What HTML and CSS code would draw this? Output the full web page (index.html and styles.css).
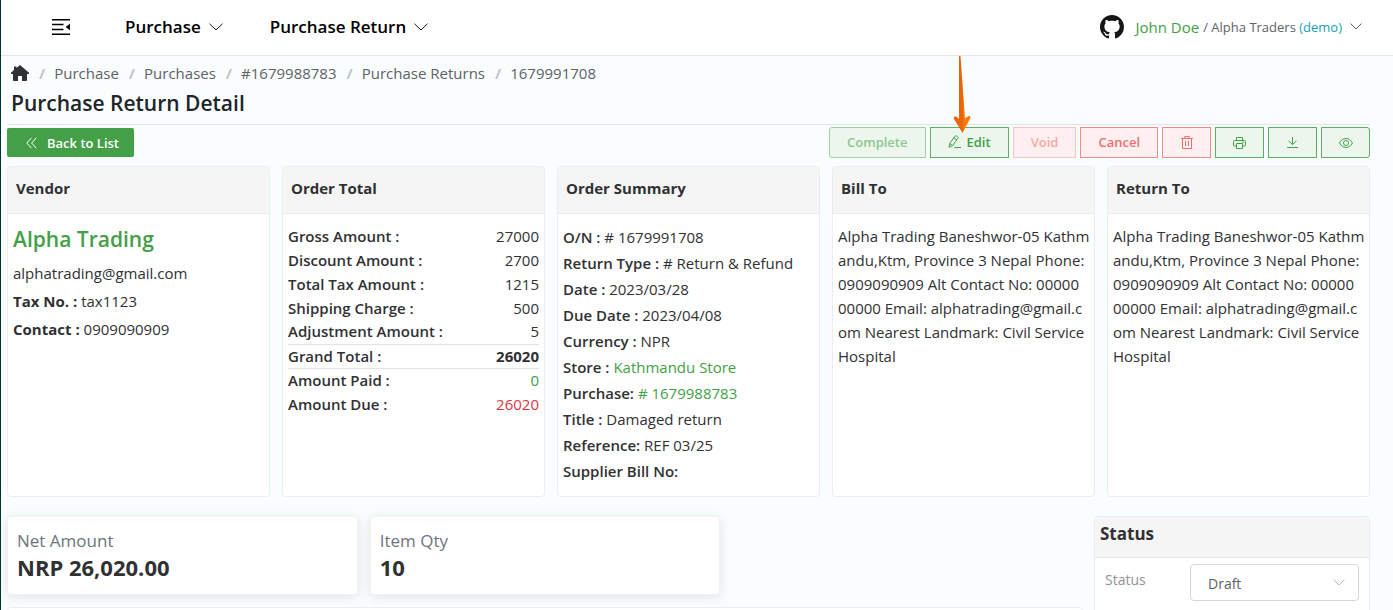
FILE: index.html
```html
<!DOCTYPE html>
<html lang="en">
<head>
<meta charset="utf-8">
<title>Purchase Return Detail</title>
<meta name="viewport" content="width=device-width, initial-scale=1">
<link rel="stylesheet" href="styles.css">
</head>
<body>
<div class="app">
  <header class="topbar">
    <nav class="topnav" aria-label="Main">
      <button class="icon-button" type="button" aria-label="Collapse menu">
        <svg width="18" height="16" viewBox="0 0 18 16"><path d="M0 .8h18M0 5.600h11.500M0 10.400h11.500M0 15.200h18" stroke="#000" stroke-width="1.500" fill="none"/><path d="M18 4.800v6.400L13.600 8z" fill="#000"/></svg>
      </button>
      <button class="menu-button" type="button">Purchase
        <svg class="chevron" width="14" height="8" viewBox="0 0 14 8"><path d="M.5.8 7 7 13.500.8"/></svg>
      </button>
      <button class="menu-button" type="button">Purchase Return
        <svg class="chevron" width="14" height="8" viewBox="0 0 14 8"><path d="M.5.8 7 7 13.500.8"/></svg>
      </button>
    </nav>
    <button class="account" type="button">
      <svg width="24" height="24" viewBox="0 0 16 16"><path fill="#161614" d="M8 0C3.580 0 0 3.580 0 8c0 3.540 2.290 6.530 5.470 7.590.4.070.550-.170.550-.380 0-.190-.010-.820-.010-1.490-2.010.370-2.530-.490-2.690-.940-.090-.230-.480-.940-.820-1.130-.280-.150-.680-.520-.010-.530.630-.010 1.080.580 1.230.820.720 1.210 1.870.870 2.330.660.070-.520.280-.870.510-1.070-1.780-.2-3.640-.890-3.640-3.950 0-.870.310-1.590.820-2.150-.080-.2-.360-1.020.080-2.120 0 0 .670-.210 2.200.820.640-.180 1.320-.270 2-.270s1.360.090 2 .270c1.530-1.040 2.200-.820 2.200-.820.440 1.100.160 1.920.080 2.120.510.560.820 1.270.820 2.150 0 3.070-1.870 3.750-3.650 3.950.290.250.540.730.540 1.480 0 1.070-.010 1.930-.010 2.200 0 .210.150.460.550.380A8.010 8.010 0 0 0 16 8c0-4.420-3.580-8-8-8z"/></svg>
      <span class="account-name">John Doe</span>
      <span class="account-org">/ Alpha Traders <span class="account-role">(demo)</span></span>
      <svg class="chevron chevron-small" width="12" height="7" viewBox="0 0 12 7"><path d="M.5.5 6 6 11.500.5"/></svg>
    </button>
  </header>

  <main class="page">
    <nav aria-label="Breadcrumb">
      <ol class="breadcrumb">
        <li><a href="#" aria-label="Home"><svg width="18" height="16" viewBox="0 0 18 16"><path fill="#303133" d="M9 0 5.500 3V1.500H3V5L0 7.700V9h2v6.200c0 .5.300.8.800.8H7v-5h4v5h4.200c.5 0 .8-.3.800-.8V9h2V7.700z"/></svg></a></li>
        <li><a href="#">Purchase</a></li>
        <li><a href="#">Purchases</a></li>
        <li><a href="#">#1679988783</a></li>
        <li><a href="#">Purchase Returns</a></li>
        <li><a href="#" aria-current="page">1679991708</a></li>
      </ol>
    </nav>
    <h1 class="page-title">Purchase Return Detail</h1>

    <div class="toolbar">
      <button class="back-button" type="button">
        <svg width="11" height="12" viewBox="0 0 11 12"><path d="M5.500.8.8 6l4.700 5.200M10.300.8 5.600 6l4.700 5.200" fill="none" stroke="#fff"/></svg>
        Back to List
      </button>
      <div class="actions">
        <button class="action action-first" type="button" disabled>Complete</button>
        <button class="action action-edit" type="button">
          <svg width="13" height="13" viewBox="0 0 13 13"><path d="M1 12.300l.7-3.800L6.800 1.300c.4-.6 1.100-.7 1.700-.3l1 .7c.6.400.7 1.100.3 1.700l-5.100 7.200L1 12.300zM5.800 2.800l3 2.100M1.700 8.600l3 2M6.500 12.500H13"/></svg>
          Edit
          <svg class="pointer" width="18" height="78" viewBox="0 0 18 78">
            <defs><linearGradient id="pointer-fill"><stop offset=".5" stop-color="#e8650a"/><stop offset=".65" stop-color="#ff7a05"/></linearGradient></defs>
            <path fill="url(#pointer-fill)" stroke="none" d="M6 0h1.500L12 62.500c1-1 2.500-2 4-2.500 1.500-.3 1.800 1 1.300 2.300L9.500 77 1 63c-.8-1.500 0-3 1.500-2.500 1.500.500 2.500 1.500 3.500 2.500z"/>
          </svg>
        </button>
        <button class="action action-danger" type="button" disabled>Void</button>
        <button class="action action-danger" type="button">Cancel</button>
        <button class="action action-icon action-danger" type="button" aria-label="Delete">
          <svg width="12" height="13" viewBox="0 0 12 13"><path d="M0 2.500h12M3.800 2.500v-2h4.400v2M1.500 2.500v10h9v-10M4.500 5v5M7.500 5v5"/></svg>
        </button>
        <button class="action action-icon" type="button" aria-label="Print">
          <svg width="13" height="12" viewBox="0 0 13 12"><path d="M3.500 9h-2c-.6 0-1-.4-1-1V4.500c0-.6.4-1 1-1h10c.6 0 1 .4 1 1V8c0 .6-.4 1-1 1h-2M3.500 3.500v-3h6v3M3.500 6.500h6v5h-6zM9 5h2"/></svg>
        </button>
        <button class="action action-icon" type="button" aria-label="Download">
          <svg width="11" height="11" viewBox="0 0 11 11"><path d="M5.500 0v7.500M1.500 3.700l4 4 4-4M0 10.500h11"/></svg>
        </button>
        <button class="action action-icon action-last" type="button" aria-label="Preview">
          <svg width="14" height="10" viewBox="0 0 14 10"><path d="M.5 5C2 2.200 4.300.5 7 .5S12 2.200 13.500 5C12 7.800 9.700 9.500 7 9.500S2 7.800.5 5z"/><circle cx="7" cy="5" r="2.500"/></svg>
        </button>
      </div>
    </div>

    <div class="cards">
      <section class="card">
        <h2 class="card-title">Vendor</h2>
        <div class="card-body vendor">
          <a class="vendor-name" href="#">Alpha Trading</a>
          <p>alphatrading@gmail.com</p>
          <p><b>Tax No. :</b> tax1123</p>
          <p><b>Contact :</b> 0909090909</p>
        </div>
      </section>
      <section class="card">
        <h2 class="card-title">Order Total</h2>
        <div class="card-body">
          <table class="totals">
            <tr><th scope="row">Gross Amount :</th><td>27000</td></tr>
            <tr><th scope="row">Discount Amount :</th><td>2700</td></tr>
            <tr><th scope="row">Total Tax Amount :</th><td>1215</td></tr>
            <tr><th scope="row">Shipping Charge :</th><td>500</td></tr>
            <tr><th scope="row">Adjustment Amount :</th><td>5</td></tr>
            <tr class="grand"><th scope="row">Grand Total :</th><td>26020</td></tr>
            <tr class="paid"><th scope="row">Amount Paid :</th><td>0</td></tr>
            <tr class="due"><th scope="row">Amount Due :</th><td>26020</td></tr>
          </table>
        </div>
      </section>
      <section class="card">
        <h2 class="card-title">Order Summary</h2>
        <ul class="card-body summary">
          <li><strong>O/N :</strong> # 1679991708</li>
          <li><strong>Return Type :</strong> # Return &amp; Refund</li>
          <li><strong>Date :</strong> 2023/03/28</li>
          <li><strong>Due Date :</strong> 2023/04/08</li>
          <li><strong>Currency :</strong> NPR</li>
          <li><strong>Store :</strong> <a href="#">Kathmandu Store</a></li>
          <li><strong>Purchase:</strong> <a href="#"># 1679988783</a></li>
          <li><strong>Title :</strong> Damaged return</li>
          <li><strong>Reference:</strong> REF 03/25</li>
          <li><strong>Supplier Bill No:</strong></li>
        </ul>
      </section>
      <section class="card">
        <h2 class="card-title">Bill To</h2>
        <address class="card-body">Alpha Trading Baneshwor-05 Kathm<br>andu,Ktm, Province 3 Nepal Phone:<br>0909090909 Alt Contact No: 00000<br>00000 Email: alphatrading@gmail.c<br>om Nearest Landmark: Civil Service<br>Hospital</address>
      </section>
      <section class="card">
        <h2 class="card-title">Return To</h2>
        <address class="card-body">Alpha Trading Baneshwor-05 Kathm<br>andu,Ktm, Province 3 Nepal Phone:<br>0909090909 Alt Contact No: 00000<br>00000 Email: alphatrading@gmail.c<br>om Nearest Landmark: Civil Service<br>Hospital</address>
      </section>
    </div>

    <div class="lower">
      <div class="lower-main">
        <div class="stats">
          <div class="stat"><span class="stat-label">Net Amount</span><span class="stat-value">NRP 26,020.00</span></div>
          <div class="stat"><span class="stat-label">Item Qty</span><span class="stat-value">10</span></div>
        </div>
        <div class="card items-card"></div>
      </div>
      <section class="card">
        <h2 class="status-title">Status</h2>
        <div class="status-row">
          <label for="status">Status</label>
          <div class="select-wrap">
            <select id="status"><option>Draft</option><option>Complete</option></select>
            <svg class="select-arrow" width="12" height="7" viewBox="0 0 12 7"><path d="M.5.500 6 6 11.500.500" fill="none" stroke="#b4b8c0"/></svg>
          </div>
        </div>
      </section>
    </div>
  </main>
</div>
</body>
</html>
```
FILE: styles.css
```css
* {
  box-sizing: border-box;
}

body {
  margin: 0;
  font-family: "Open Sans", "Noto Sans", sans-serif;
  font-size: 15px;
  line-height: 24px;
  color: #303133;
  background: #f9fdfe;
}

button, select {
  font: inherit;
  color: inherit;
  margin: 0;
}

button {
  background: none;
  border: 0;
  padding: 0;
  cursor: pointer;
}

a {
  color: #43a047;
  text-decoration: none;
}

p, h1, h2, ul, ol {
  margin: 0;
  padding: 0;
  list-style: none;
}

.app {
  height: 100vh;
  overflow: hidden;
  border-left: 1px solid #00332f;
}

.topbar {
  display: flex;
  justify-content: space-between;
  align-items: center;
  height: 56px;
  padding: 0 31px 2px 51px;
  background: #fff;
  border-bottom: 1px solid #e4e7eb;
}

.topnav {
  display: flex;
  align-items: center;
}

.icon-button {
  display: flex;
  margin-right: 55px;
}

.menu-button {
  display: flex;
  align-items: center;
  gap: 8px;
  margin-right: 47px;
  font-size: 17px;
  font-weight: 600;
  color: #000;
}

.chevron {
  fill: none;
  stroke: #111;
}

.chevron-small {
  margin-left: 4px;
  stroke: #606266;
}

.account {
  display: flex;
  align-items: center;
  gap: 4px;
  font-size: 13px;
  color: #606266;
}

.account-name {
  margin-left: 8px;
  font-size: 15px;
  color: #43a047;
}

.account-role {
  color: #17a2b8;
}

.page {
  padding: 5px 23px 0 6px;
}

.breadcrumb {
  display: flex;
  padding-left: 4px;
}

.breadcrumb li {
  display: flex;
  align-items: center;
}

.breadcrumb li + li::before {
  content: "/";
  padding: 0 9px 0 10px;
  font-weight: 700;
  color: #c0c4cc;
}

.breadcrumb a {
  display: flex;
  color: #606266;
}

.page-title {
  padding: 4px 4px 6px;
  font-size: 21px;
  font-weight: 600;
  line-height: 29px;
  color: #212529;
  border-bottom: 1px solid #e2e5e8;
}

.toolbar {
  display: flex;
  justify-content: space-between;
  align-items: center;
  padding: 2px 0 8px;
}

.back-button {
  display: flex;
  align-items: center;
  gap: 10px;
  height: 29px;
  padding: 0 15px 0 19px;
  font-size: 13px;
  font-weight: 600;
  color: #fff;
  background: #43a047;
  border-radius: 2px;
}

.actions {
  display: flex;
  gap: 4px;
}

.action {
  position: relative;
  display: flex;
  align-items: center;
  justify-content: center;
  gap: 6px;
  height: 31px;
  padding: 0 17px 2px;
  font-size: 13px;
  font-weight: 600;
  color: #43a047;
  background: #ecf6ed;
  border: 1px solid #5fae63;
}

.action svg {
  fill: none;
  stroke: currentColor;
}

.action:disabled {
  color: #8ec691;
  border-color: #a1d0a3;
}

.action-danger {
  color: #f56c6c;
  background: #fef0f0;
  border-color: #f68a8a;
}

.action-danger:disabled {
  color: #f9a7a7;
  border-color: #fbc4c4;
}

.action-icon {
  width: 49px;
  padding: 0;
}

.action-first {
  border-radius: 3px 0 0 3px;
}

.action-last {
  border-radius: 0 3px 3px 0;
}

.action .pointer {
  position: absolute;
  left: 22px;
  bottom: 23px;
}

.cards {
  display: grid;
  grid-template-columns: repeat(5, minmax(0, 1fr));
  gap: 12px;
}

.card {
  background: #fff;
  border: 1px solid #ebeef0;
  border-radius: 4px;
  overflow: hidden;
}

.card-title {
  padding: 9px 8px 13px;
  font-size: 15px;
  font-weight: 700;
  background: #f5f5f5;
  border-bottom: 1px solid #ebebeb;
}

.card-body {
  min-height: 282px;
  padding: 10px 5px;
  font-style: normal;
  white-space: nowrap;
}

.vendor p {
  line-height: 28px;
}

.vendor-name {
  display: block;
  padding-bottom: 5px;
  font-size: 21px;
  font-weight: 600;
  line-height: 30px;
}

.totals {
  width: 100%;
  border-collapse: collapse;
}

.totals th,
.totals td {
  height: 24px;
  padding: 0;
  line-height: 23px;
}

.totals th {
  font-weight: 600;
  text-align: left;
}

.totals td {
  text-align: right;
}

.totals .grand > * {
  border-top: 1px solid #e4e4e4;
  border-bottom: 1px solid #e4e4e4;
}

.totals .grand td {
  font-weight: 700;
}

.totals .paid td {
  color: #43a047;
}

.totals .due td {
  color: #dc3545;
}

.summary li {
  line-height: 26px;
}

.summary strong {
  font-weight: 600;
}

.lower {
  display: grid;
  grid-template-columns: minmax(0, 1fr) 276px;
  gap: 11px;
  margin-top: 19px;
}

.stats {
  display: grid;
  grid-template-columns: repeat(3, minmax(0, 1fr));
  gap: 12px;
  margin-bottom: 12px;
}

.stat {
  display: flex;
  flex-direction: column;
  padding: 12px 9px 13px;
  background: #fff;
  border: 1px solid #f0f2f4;
  border-radius: 4px;
  box-shadow: 0 2px 12px rgba(0, 0, 0, 0.1);
}

.stat-label {
  font-size: 17px;
  color: #6c757d;
}

.stat-value {
  font-size: 22px;
  font-weight: 700;
  line-height: 28px;
}

.items-card {
  height: 120px;
}

.status-title {
  padding: 5px 5px 11px;
  font-size: 17px;
  font-weight: 700;
  background: #f5f5f5;
  border-bottom: 1px solid #e8e8e8;
}

.status-row {
  display: flex;
  justify-content: space-between;
  padding: 6px 10px 60px;
}

.status-row label {
  padding-top: 4px;
  font-size: 14px;
  color: #909399;
}

.select-wrap {
  position: relative;
  width: 169px;
}

.select-wrap select {
  width: 100%;
  height: 37px;
  padding: 2px 17px 0;
  font-size: 14px;
  color: #606266;
  background: #fff;
  border: 1px solid #d3d6db;
  border-radius: 4px;
  appearance: none;
}

.select-arrow {
  position: absolute;
  top: 15px;
  right: 14px;
}
```
